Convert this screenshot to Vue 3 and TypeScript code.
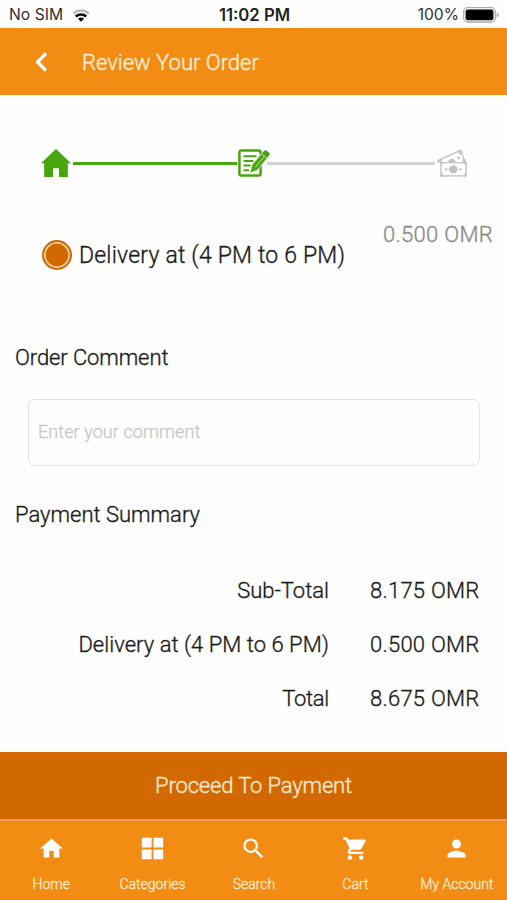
<script setup lang="ts">
import { ref } from 'vue'

interface SummaryRow { label: string; value: string; fit: string }
interface Tab { name: string; path: string }

const comment = ref('')
const slot = ref('evening')

const summary: SummaryRow[] = [
  { label: 'Sub-Total', value: '8.175 OMR', fit: 'fit-sub' },
  { label: 'Delivery at (4 PM to 6 PM)', value: '0.500 OMR', fit: 'fit-delivery' },
  { label: 'Total', value: '8.675 OMR', fit: 'fit-total' },
]

const tabs: Tab[] = [
  { name: 'Home', path: 'M10 20v-6h4v6h5v-8h3L12 3 2 12h3v8z' },
  { name: 'Categories', path: 'M2.5 2.5h8.7v8.7H2.5zM12.8 2.5h8.7v8.7h-8.7zM2.5 12.8h8.7v8.7H2.5zM12.8 12.8h8.7v8.7h-8.7z' },
  { name: 'Search', path: 'M15.5 14h-.79l-.28-.27A6.47 6.47 0 0 0 16 9.5 6.5 6.5 0 1 0 9.5 16c1.61 0 3.09-.59 4.23-1.57l.27.28v.79l5 4.99L20.49 19l-4.99-5zm-6 0C7.01 14 5 11.99 5 9.5S7.01 5 9.5 5 14 7.01 14 9.5 11.99 14 9.5 14z' },
  { name: 'Cart', path: 'M1 2h3.3l1 2H20c.9 0 1.300.8.900 1.500L17.300 12c-.4.700-1 1-1.800 1H8.100l-1 1.900H19v2H7c-1.600 0-2.500-1.600-1.700-3l1.300-2.300L3 4H1zM9 20a2 2 0 1 1-4 0 2 2 0 0 1 4 0zM19 20a2 2 0 1 1-4 0 2 2 0 0 1 4 0z' },
  { name: 'My Account', path: 'M12 12a4 4 0 1 0 0-8 4 4 0 0 0 0 8zm0 2c-2.67 0-8 1.34-8 4v2h16v-2c0-2.66-5.33-4-8-4z' },
]
</script>

<template>
  <div class="screen">
    <div class="status">
      <div class="carrier">
        <span>No SIM</span>
        <svg class="wifi" viewBox="0 0 18 13">
          <path class="faint" d="M1.2 4.7A11.3 11.3 0 0 1 16.8 4.7" />
          <path d="M3.7 7.5A7.7 7.7 0 0 1 14.3 7.5" />
          <path class="dot" d="M9 12.8 5.9 9.8A4.3 4.3 0 0 1 12.1 9.8z" />
        </svg>
      </div>
      <span class="time">11:02 PM</span>
      <div class="power">
        <span>100%</span>
        <svg class="battery" viewBox="0 0 37 16">
          <rect class="case" x=".7" y=".7" width="31.6" height="14.3" rx="4" />
          <rect x="2.6" y="2.6" width="27.8" height="10.6" rx="2" />
          <path class="cap" d="M33.7 5.500q2 .6 2 2.400t-2 2.400z" />
        </svg>
      </div>
    </div>

    <header class="header">
      <svg class="back" viewBox="0 0 14 22"><path d="M12 2.500 3.500 11l8.500 8.500" /></svg>
      <h1>Review Your Order</h1>
    </header>

    <main class="content">
      <div class="steps">
        <svg class="step" viewBox="0 0 30 28">
          <path class="green" d="M15 0 30 14.200h-3.200V28H18v-8.700h-6V28H3.200V14.200H0z" />
        </svg>
        <span class="line done"></span>
        <svg class="step note" viewBox="0 0 32 28">
          <path class="outline" d="M21 1.400H3.400a2 2 0 0 0-2 2v21.200a2 2 0 0 0 2 2h17.200a2 2 0 0 0 2-2V17" />
          <path class="outline" d="M20 1.400q2.600 0 2.600 2v2" />
          <path class="text-lines" d="M5.500 7.200h13M5.500 12h10M5.500 16.600h7M5.500 21.300h5.500" />
          <path class="green pencil" d="m12 24 2-8L26 1.700a2 2 0 0 1 2.800-.2l2.500 2a2 2 0 0 1 .2 2.800L19.500 21z" />
          <path class="cut" d="m23.700 5 5 4.200M17.300 18.300 25.700 8.200" />
        </svg>
        <span class="line pending"></span>
        <svg class="step cash" viewBox="0 0 30 28">
          <path class="bill" d="M4.500 14 1.300 11.500 23.500 1.200 28 13" />
          <path class="fill" d="M0 11.500l4-2 1.200 3.500L1.500 14zM20.500 2.200l3.500-2 2 4-3.500 1.200zM25.500 10.500l2.500-1 1.500 4h-4zM11 13.500c.5-4.800 7-5.500 8 0z" />
          <circle class="fill" cx="21.5" cy="9" r="1.4" />
          <rect class="bill" x="4" y="13.7" width="25" height="13.2" />
          <path class="fill" d="M3.500 13h4L3.500 17.500zM25.500 13h4v4.500zM3.500 23 7.500 27.500h-4zM29.500 23v4.500h-4z" />
          <ellipse class="fill" cx="16.3" cy="20.3" rx="4.4" ry="4" />
          <circle class="fill" cx="9.2" cy="20.3" r="1.2" /><circle class="fill" cx="23.6" cy="20.3" r="1.2" />
        </svg>
      </div>

      <section class="delivery">
        <label class="option">
          <input v-model="slot" type="radio" name="slot" value="evening" />
          <span>Delivery at (4 PM to 6 PM)</span>
        </label>
        <span class="price">0.500 OMR</span>
      </section>

      <h2 class="fit-order">Order Comment</h2>
      <input v-model="comment" class="comment" type="text" placeholder="Enter your comment" />

      <h2>Payment Summary</h2>
      <dl class="summary">
        <template v-for="row in summary" :key="row.label">
          <dt><span :class="row.fit">{{ row.label }}</span></dt>
          <dd>{{ row.value }}</dd>
        </template>
      </dl>
    </main>

    <button class="proceed" type="button"><span>Proceed To Payment</span></button>
    <nav class="tabs">
      <a v-for="tab in tabs" :key="tab.name" class="tab">
        <svg viewBox="0 0 24 24"><path :d="tab.path" /></svg>
        <span>{{ tab.name }}</span>
      </a>
    </nav>
  </div>
</template>

<style>
body { margin: 0; background: #fefefe; }
</style>

<style scoped>
* { box-sizing: border-box; }
.screen {
  width: 507px;
  height: 900px;
  display: flex;
  flex-direction: column;
  overflow: hidden;
  background: #fefefe;
  color: #1c1c1c;
  font: 300 22px/30px Roboto, "Noto Sans", sans-serif;
  -webkit-text-stroke: .35px currentColor;
}
svg { display: block; flex: none; }
h1, h2, dl, dd { margin: 0; font-size: 22px; font-weight: 300; }
h1 { padding-top: 2px; }

.status {
  height: 28px;
  flex: none;
  display: grid;
  grid-template-columns: 1fr auto 1fr;
  align-items: center;
  padding: 2px 7px 0 9px;
  color: #303030;
  font: 400 15.7px/26px Inter, sans-serif;
  -webkit-text-stroke: 0;
}
.carrier, .power { display: flex; align-items: center; }
.carrier { gap: 9px; }
.power { justify-content: flex-end; gap: 4px; font-size: 15.6px; }
.time { color: #222; font-size: 16.7px; font-weight: 600; }
.wifi { width: 18px; height: 13px; }
.wifi path { fill: none; stroke: #111; stroke-width: 2.5; }
.wifi .faint { stroke: #bbb; }
.wifi .dot { fill: #111; stroke: none; }
.battery { width: 37px; height: 16px; }
.battery .case { fill: #fff; stroke: #aaa; stroke-width: 1.3; }
.battery .cap { fill: #aaa; }

.header {
  height: 67px;
  flex: none;
  display: flex;
  align-items: center;
  gap: 34px;
  padding-left: 34px;
  background: #f28c13;
  color: #fff0dc;
}
.back { width: 14px; height: 22px; }
.back path { fill: none; stroke: #fff; stroke-width: 3.4; }

.content { flex: 1; display: flex; flex-direction: column; }
.steps {
  display: flex;
  align-items: center;
  padding: 54px 40px 0 41px;
}
.step { width: 30px; height: 28px; }
.note { width: 32px; }
.green { fill: #48a50b; }
.outline { fill: none; stroke: #48a50b; stroke-width: 2.5; }
.text-lines { fill: none; stroke: #48a50b; stroke-width: 2; }
.pencil { stroke: #fefefe; stroke-width: .6; }
.cut { fill: none; stroke: #d9edc8; stroke-width: .9; }
.bill { fill: #fff; stroke: #c8c8c8; stroke-width: 1.5; }
.fill { fill: #c3c3c3; }
.line { height: 3px; background: #48a50b; }
.done { width: 164px; margin: 0 1px 0 2px; }
.pending { flex: 1; margin: 0 2px 0 -3px; background: #d2d2d2; }

.delivery {
  display: flex;
  justify-content: space-between;
  padding: 43px 14px 0 42px;
}
.option {
  display: flex;
  align-items: center;
  gap: 7px;
  height: 30px;
  margin-top: 20px;
  font-size: 23px;
  letter-spacing: .2px;
}
.option span { padding-top: 1px; }
.option input {
  appearance: none;
  width: 30px;
  height: 30px;
  margin: 0;
  border: 2px solid #d26800;
  border-radius: 50%;
  background: #d26800;
  box-shadow: inset 0 0 0 1.6px #ffe0bd;
}
.price { color: #8b8b8b; letter-spacing: .3px; }

h2 { padding-left: 15px; }
.fit-order { margin-top: 73px; letter-spacing: -.1px; }
.comment {
  appearance: none;
  width: 452px;
  height: 67px;
  margin: 26px 0 34px 28px;
  padding: 0 10px 2px 9px;
  border: 1.5px solid #e3e3e3;
  border-radius: 7px;
  outline: 0;
  background: #fefefe;
  color: #1c1c1c;
  font: 300 18px/30px Roboto, sans-serif;
  -webkit-text-stroke: inherit;
}
.comment::placeholder { color: #c9c9c9; letter-spacing: .08px; }
.summary {
  display: grid;
  grid-template-columns: 329px 109px;
  grid-auto-rows: 54px;
  align-items: center;
  column-gap: 41px;
  margin-top: 34px;
}
dt { text-align: right; }
dd { white-space: nowrap; letter-spacing: .25px; }
.fit-delivery { letter-spacing: .04px; }
.fit-total { letter-spacing: -.3px; }

.proceed {
  height: 67px;
  flex: none;
  border: 0;
  padding: 1px 0 0;
  background: #d26800;
  color: #ffead2;
  font: 300 22px/30px Roboto, sans-serif;
  letter-spacing: -.15px;
  -webkit-text-stroke: inherit;
}
.tabs {
  height: 81px;
  flex: none;
  display: grid;
  grid-template-columns: repeat(5, 1fr);
  border-top: 2px solid #e99c54;
  background: #f28c13;
  color: #ffeacd;
  font-size: 14px;
  line-height: 20px;
}
.tab {
  display: flex;
  flex-direction: column;
  align-items: center;
  gap: 12px;
  padding: 14px 0 0 1px;
}
.tab svg { width: 27px; height: 27px; fill: #fff; }
</style>
